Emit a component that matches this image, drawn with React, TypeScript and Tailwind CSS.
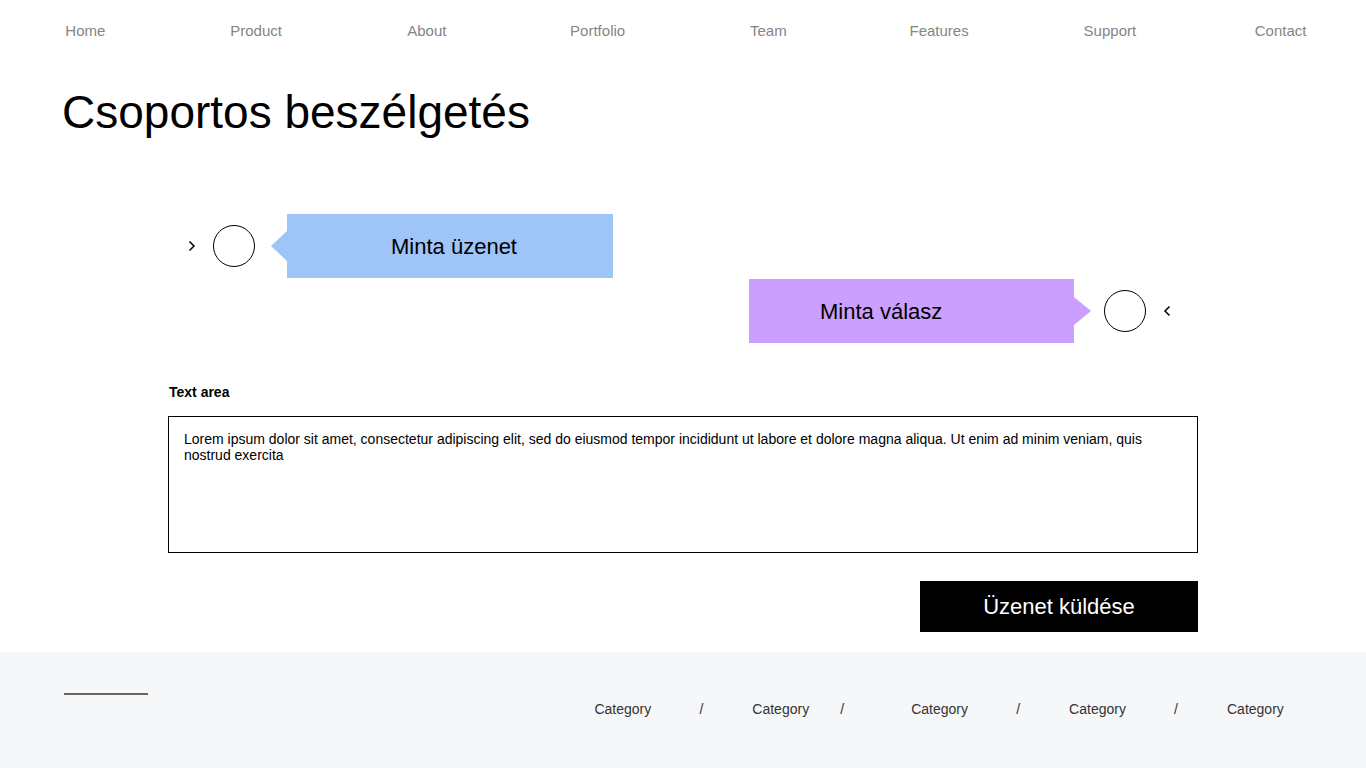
import React from "react";

const navItems = ["Home", "Product", "About", "Portfolio", "Team", "Features", "Support", "Contact"];

function ChevronRight() {
  return (
    <svg width="8" height="12" viewBox="0 0 8 12" className="shrink-0">
      <path d="M1.5 1.5 L6 6 L1.5 10.5" fill="none" stroke="#000" strokeWidth="1.5" />
    </svg>
  );
}

function ChevronLeft() {
  return (
    <svg width="8" height="12" viewBox="0 0 8 12" className="shrink-0">
      <path d="M6.5 1.5 L2 6 L6.5 10.5" fill="none" stroke="#000" strokeWidth="1.5" />
    </svg>
  );
}

function Cat() {
  return <span className="inline-block w-[56px] whitespace-nowrap">Category</span>;
}

export default function App() {
  return (
    <div className="min-h-screen bg-white font-['Liberation_Sans',Arial,sans-serif] text-black">
      <nav className="grid grid-cols-8 h-[60px] pt-[2px] items-center text-[15px] text-[#858585]">
        {navItems.map((n) => (
          <div key={n} className="text-center">
            {n}
          </div>
        ))}
      </nav>

      <h1 className="ml-[62px] mt-[24px] text-[46px] leading-[56px] font-normal">Csoportos beszélgetés</h1>

      <div className="w-[1030px] mx-auto mt-[74px]">
        <div className="flex items-center h-[64px] pl-[20px]">
          <ChevronRight />
          <div className="ml-[17px] w-[42px] h-[42px] rounded-full border border-black shrink-0" />
          <svg width="16" height="30" viewBox="0 0 16 30" className="ml-[16px] shrink-0">
            <polygon points="16,0 0,15 16,30" fill="#9fc5f8" />
          </svg>
          <div className="w-[326px] h-[64px] bg-[#9fc5f8] flex items-center justify-center text-[22px] pl-[8px]">
            Minta üzenet
          </div>
        </div>

        <div className="flex items-center justify-end h-[64px] mt-[1px] pr-[27px]">
          <div className="w-[325px] h-[64px] bg-[#cb9ffe] flex items-center pl-[71px] text-[22px]">Minta válasz</div>
          <svg width="17" height="28" viewBox="0 0 17 28" className="shrink-0">
            <polygon points="0,0 17,14 0,28" fill="#cb9ffe" />
          </svg>
          <div className="ml-[13px] w-[42px] h-[42px] rounded-full border border-black shrink-0" />
          <div className="ml-[17px]">
            <ChevronLeft />
          </div>
        </div>

        <div className="mt-[39px] ml-[1px] text-[14px] leading-[20px] font-bold">Text area</div>
        <textarea
          className="mt-[14px] block w-full h-[137px] border border-black pt-[14px] px-[15px] pb-[15px] text-[14px] leading-[16px] resize-none outline-none font-['Liberation_Sans',Arial,sans-serif]"
          defaultValue="Lorem ipsum dolor sit amet, consectetur adipiscing elit, sed do eiusmod tempor incididunt ut labore et dolore magna aliqua. Ut enim ad minim veniam, quis nostrud exercita"
        />

        <div className="flex justify-end mt-[28px]">
          <button className="w-[278px] h-[51px] bg-black text-white text-[22px]">Üzenet küldése</button>
        </div>
      </div>

      <footer className="mt-[20px] h-[116px] bg-[#f6f7f9] flex items-start pl-[64px] pr-[83px]">
        <div className="mt-[41px] w-[84px] h-[2px] bg-[#666]" />
        <div className="ml-auto mt-[47px] flex items-center text-[14px] leading-[20px] text-[#333]">
          <Cat />
          <span className="ml-[49px]">/</span>
          <span className="ml-[49px]">
            <Cat />
          </span>
          <span className="ml-[32px]">/</span>
          <span className="ml-[67px]">
            <Cat />
          </span>
          <span className="ml-[49px]">/</span>
          <span className="ml-[49px]">
            <Cat />
          </span>
          <span className="ml-[49px]">/</span>
          <span className="ml-[49px]">
            <Cat />
          </span>
        </div>
      </footer>
    </div>
  );
}
